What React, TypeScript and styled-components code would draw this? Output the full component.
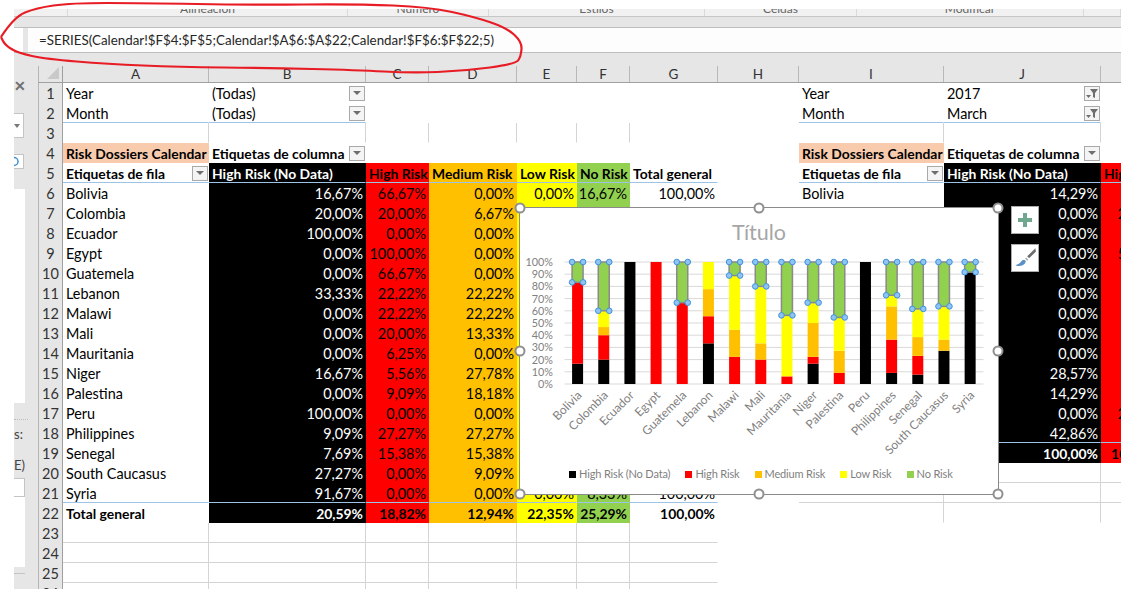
import styled, { createGlobalStyle } from 'styled-components';

const GlobalStyle = createGlobalStyle`
  html, body {
    margin: 0;
    padding: 0;
    background: #fff;
  }
  body {
    font-family: Lato, "Liberation Sans", sans-serif;
    overflow: hidden;
  }
`;

const COLUMNS = '25px 146px 157px 63px 88px 60px 53px 88px 81px 145px 157px 68px';

const colors = {
  black: '#000000',
  red: '#ff0000',
  orange: '#ffc000',
  yellow: '#ffff00',
  green: '#92d050',
  peach: '#f8cbad',
};

type Fill = keyof typeof colors;
type Line = 'grid' | 'blue';

type CellSpec = {
  text?: string;
  fill?: Fill;
  bold?: boolean;
  right?: boolean;
  filter?: 'arrow' | 'funnel';
  lineRight?: boolean;
  lineBottom?: Line;
};

const Page = styled.div`
  position: relative;
  width: 1121px;
  height: 589px;
  overflow: hidden;
  background: #fff;
  display: flex;
  flex-direction: column;
`;

const RibbonGap = styled.div`
  height: 9px;
`;

const Ribbon = styled.div`
  height: 7px;
  margin-left: 14px;
  background: #f1f1f1;
  border-bottom: 1px solid #c6c6c6;
  overflow: hidden;
  display: grid;
  grid-template-columns: 54px 280px 141px 216px 152px 227px 1fr;
`;

const RibbonGroup = styled.div`
  height: 7px;
  display: flex;
  align-items: flex-end;
  justify-content: center;
  font-size: 12px;
  line-height: 14px;
  color: #666;
  border-right: 1px solid #dadada;
`;

const RibbonBand = styled.div`
  height: 10px;
  margin-left: 14px;
  background: #e6e6e6;
  border-bottom: 1px solid #bdbdbd;
`;

const FormulaRow = styled.div`
  height: 24px;
  margin-left: 14px;
  background: #e6e6e6;
  border-bottom: 1px solid #bdbdbd;
  display: flex;
  gap: 5px;
`;

const NameBox = styled.div`
  width: 9px;
  background: #fff;
`;

const FormulaInput = styled.div`
  flex: 1;
  background: #fdfdfd;
  padding-left: 11px;
  font-size: 13.35px;
  line-height: 24px;
  color: #262626;
  white-space: nowrap;
`;

const Workspace = styled.div`
  flex: 1;
  display: flex;
  min-height: 0;
`;

const Margin = styled.div`
  width: 14px;
  flex-shrink: 0;
`;

const SidePanel = styled.div`
  width: 24px;
  flex-shrink: 0;
  background: #e6e6e6;
  display: flex;
  flex-direction: column;
  align-items: flex-start;
  overflow: hidden;
  box-sizing: border-box;
  padding-top: 25px;
`;

const CloseMark = styled.div`
  width: 12px;
  height: 16px;
  line-height: 16px;
  margin-bottom: 1px;
  text-align: center;
  font-size: 14px;
  font-weight: 900;
  color: #707070;
`;

const ComboBox = styled.div`
  width: 10px;
  height: 25px;
  margin-top: 18px;
  background: #fff;
  border: 1px solid #c4c4c4;
  border-left: none;
  box-sizing: border-box;
  display: flex;
  align-items: center;
`;

const ComboArrow = styled.span`
  width: 0;
  height: 0;
  border-left: 3px solid transparent;
  border-right: 3px solid transparent;
  border-top: 4px solid #777;
`;

const RefreshBox = styled.div`
  width: 10px;
  height: 15px;
  margin-top: 16px;
  background: #fff;
  border: 1px solid #c4c4c4;
  border-left: none;
  box-sizing: border-box;
  display: flex;
  align-items: center;
`;

const WhiteBlock = styled.div`
  width: 11px;
  height: 214px;
  margin-top: 20px;
  background: #fff;
`;

const DottedRule = styled.div`
  width: 14px;
  margin-top: 16px;
  border-top: 1px dotted #bdbdbd;
`;

const PanelLabel = styled.div<{ $top: number; $width: number }>`
  width: ${(p) => p.$width}px;
  height: 14px;
  margin-top: ${(p) => p.$top}px;
  font-size: 13px;
  line-height: 14px;
  color: #444;
  text-align: right;
`;

const InputPanel = styled.div`
  width: 11px;
  height: 89px;
  margin-top: 6px;
  background: #fff;
`;

const InputBox = styled.div`
  height: 19px;
  border: 1px solid #c4c4c4;
  border-left: none;
  box-sizing: border-box;
`;

const PanelRule = styled.div`
  width: 11px;
  margin-top: 6px;
  border-top: 1px solid #c4c4c4;
`;

const Sheet = styled.div`
  flex: 1;
  min-width: 0;
  display: flex;
  flex-direction: column;
`;

const HeaderRow = styled.div`
  display: grid;
  grid-template-columns: ${COLUMNS};
  background: #e6e6e6;
  padding-top: 13px;
  height: 30px;
  box-sizing: border-box;
  border-bottom: 1px solid #a0a0a0;
`;

const Corner = styled.div`
  border-left: 1px solid #b5b5b5;
  border-right: 1px solid #a0a0a0;
  display: flex;
  justify-content: flex-end;
  padding: 1px 3px 3px 0;
`;

const CornerMark = styled.span`
  width: 12px;
  height: 12px;
  background: #c9c9c9;
  clip-path: polygon(100% 0, 100% 100%, 0 100%);
`;

const ColumnLabel = styled.div`
  border-right: 1px solid #b8b8b8;
  text-align: center;
  font-size: 13.5px;
  line-height: 16px;
  color: #333;
`;

const Row = styled.div`
  display: grid;
  grid-template-columns: ${COLUMNS};
  height: 20px;
`;

const RowNumber = styled.div`
  box-sizing: border-box;
  background: #e6e6e6;
  border-left: 1px solid #b5b5b5;
  border-right: 1px solid #a0a0a0;
  border-bottom: 1px solid #b4b4b4;
  text-align: center;
  font-size: 14.5px;
  line-height: 21px;
  color: #333;
`;

const Cell = styled.div<{
  $fill?: Fill;
  $bold?: boolean;
  $right?: boolean;
  $lineRight?: boolean;
  $lineBottom?: Line;
}>`
  box-sizing: border-box;
  height: 20px;
  min-width: 0;
  display: flex;
  align-items: center;
  justify-content: ${(p) => (p.$right ? 'flex-end' : 'flex-start')};
  padding: 1px ${(p) => (p.$right ? 2 : 3)}px 0 3px;
  overflow: hidden;
  white-space: nowrap;
  font-size: ${(p) => (p.$bold ? 13.9 : 14.4)}px;
  font-weight: ${(p) => (p.$bold ? 700 : 400)};
  color: ${(p) => (p.$fill === 'black' ? '#fff' : '#000')};
  background: ${(p) => (p.$fill ? colors[p.$fill] : 'transparent')};
  border-right: 1px solid ${(p) => (p.$lineRight ? '#d4d4d4' : 'transparent')};
  border-bottom: 1px solid
    ${(p) =>
      p.$lineBottom === 'blue'
        ? '#9dc3e6'
        : p.$lineBottom === 'grid'
          ? '#d4d4d4'
          : 'transparent'};
`;

const FilterButton = styled.span`
  flex-shrink: 0;
  width: 16px;
  height: 15px;
  margin-left: auto;
  margin-right: -3px;
  box-sizing: border-box;
  background: #f4f4f4;
  border: 1px solid #a9a9a9;
  display: flex;
  align-items: center;
  justify-content: center;
`;

const FilterArrow = styled.span`
  width: 0;
  height: 0;
  border-left: 4px solid transparent;
  border-right: 4px solid transparent;
  border-top: 4px solid #6e6e6e;
`;

const ChartCard = styled.div`
  position: absolute;
  left: 519px;
  top: 207px;
  width: 480px;
  height: 288px;
  box-sizing: border-box;
  background: #fff;
  border: 1px solid #8a8a8a;
  display: flex;
  flex-direction: column;
`;

const ChartTitle = styled.div`
  height: 40px;
  padding-top: 10px;
  box-sizing: border-box;
  text-align: center;
  font-size: 21.5px;
  line-height: 28px;
  color: #a6a6a6;
`;

const PlotSvg = styled.svg`
  display: block;
  width: 478px;
  height: 214px;
`;

const AxisText = styled.text<{ $size: number }>`
  font-family: Lato, "Liberation Sans", sans-serif;
  font-size: ${(p) => p.$size}px;
  fill: #7f7f7f;
`;

const Legend = styled.div`
  display: flex;
  align-items: center;
  gap: 15px;
  padding: 4px 0 0 49px;
  font-size: 11px;
  letter-spacing: -0.15px;
  line-height: 16px;
  color: #7f7f7f;
  white-space: nowrap;
`;

const LegendItem = styled.div`
  display: flex;
  align-items: center;
  gap: 3px;
`;

const LegendSwatch = styled.span<{ $fill: Fill }>`
  width: 7px;
  height: 7px;
  background: ${(p) => colors[p.$fill]};
`;

const Handle = styled.span<{ $x: number; $y: number }>`
  position: absolute;
  left: ${(p) => p.$x}%;
  top: ${(p) => p.$y}%;
  width: 11px;
  height: 11px;
  box-sizing: border-box;
  transform: translate(-50%, -50%);
  border-radius: 50%;
  background: #fff;
  border: 2px solid #8f8f8f;
`;

const ChartTool = styled.div<{ $top: number }>`
  position: absolute;
  left: 1011px;
  top: ${(p) => p.$top}px;
  width: 28px;
  height: 28px;
  box-sizing: border-box;
  background: #fff;
  border: 1px solid #ababab;
  display: flex;
  align-items: center;
  justify-content: center;
`;

const Scribble = styled.svg`
  position: absolute;
  left: 0;
  top: 0;
  width: 1121px;
  height: 589px;
  pointer-events: none;
`;

type Country = [string, number, number, number, number, number];

const countries: Country[] = [
  ['Bolivia', 16.67, 66.67, 0, 0, 16.67],
  ['Colombia', 20, 20, 6.67, 13.33, 40],
  ['Ecuador', 100, 0, 0, 0, 0],
  ['Egypt', 0, 100, 0, 0, 0],
  ['Guatemela', 0, 66.67, 0, 0, 33.33],
  ['Lebanon', 33.33, 22.22, 22.22, 22.22, 0],
  ['Malawi', 0, 22.22, 22.22, 44.44, 11.11],
  ['Mali', 0, 20, 13.33, 46.67, 20],
  ['Mauritania', 0, 6.25, 0, 50, 43.75],
  ['Niger', 16.67, 5.56, 27.78, 16.67, 33.33],
  ['Palestina', 0, 9.09, 18.18, 27.27, 45.45],
  ['Peru', 100, 0, 0, 0, 0],
  ['Philippines', 9.09, 27.27, 27.27, 9.09, 27.27],
  ['Senegal', 7.69, 15.38, 15.38, 23.08, 38.46],
  ['South Caucasus', 27.27, 0, 9.09, 27.27, 36.36],
  ['Syria', 91.67, 0, 0, 0, 8.33],
];

const seriesFills: Fill[] = ['black', 'red', 'orange', 'yellow', 'green'];
const seriesNames = ['High Risk (No Data)', 'High Risk', 'Medium Risk', 'Low Risk', 'No Risk'];

const pct = (n: number) => n.toFixed(2).replace('.', ',') + '%';

// J and K of the second pivot, rows 6 to 19
const secondPivot: [string, string][] = [
  ['14,29%', '0,00%'],
  ['0,00%', '25,00%'],
  ['0,00%', '0,00%'],
  ['0,00%', '50,00%'],
  ['0,00%', '0,00%'],
  ['0,00%', '0,00%'],
  ['0,00%', '0,00%'],
  ['0,00%', '0,00%'],
  ['0,00%', '0,00%'],
  ['28,57%', '0,00%'],
  ['14,29%', '0,00%'],
  ['0,00%', '25,00%'],
  ['42,86%', '0,00%'],
  ['100,00%', '100,00%'],
];

function leftCells(row: number): CellSpec[] {
  if (row === 1 || row === 2) {
    const line: Line | undefined = row === 2 ? 'blue' : undefined;
    return [
      { text: row === 1 ? 'Year' : 'Month', lineBottom: line },
      { text: '(Todas)', filter: 'arrow', lineBottom: line },
      {}, {}, {}, {}, {},
    ];
  }
  if (row === 3) {
    return Array.from({ length: 6 }, () => ({ lineRight: true } as CellSpec)).concat([{}]);
  }
  if (row === 4) {
    return [
      { text: 'Risk Dossiers Calendar', fill: 'peach', bold: true },
      { text: 'Etiquetas de columna', bold: true, filter: 'arrow' },
      {}, {}, {}, {}, {},
    ];
  }
  if (row === 5) {
    const b: Line = 'blue';
    return [
      { text: 'Etiquetas de fila', bold: true, filter: 'arrow', lineBottom: b },
      { text: 'High Risk (No Data)', fill: 'black', bold: true, lineBottom: b },
      { text: 'High Risk', fill: 'red', bold: true, lineBottom: b },
      { text: 'Medium Risk', fill: 'orange', bold: true, lineBottom: b },
      { text: 'Low Risk', fill: 'yellow', bold: true, lineBottom: b },
      { text: 'No Risk', fill: 'green', bold: true, lineBottom: b },
      { text: 'Total general', bold: true, lineBottom: b },
    ];
  }
  if (row >= 6 && row <= 21) {
    const [name, ...vals] = countries[row - 6];
    const line: Line | undefined = row === 21 ? 'blue' : undefined;
    return [
      { text: name, lineBottom: line },
      ...vals.map((v, i) => ({ text: pct(v), fill: seriesFills[i], right: true, lineBottom: line })),
      { text: '100,00%', right: true, lineBottom: line },
    ];
  }
  if (row === 22) {
    const totals = [20.59, 18.82, 12.94, 22.35, 25.29];
    return [
      { text: 'Total general', bold: true },
      ...totals.map((v, i) => ({ text: pct(v), fill: seriesFills[i], bold: true, right: true })),
      { text: '100,00%', bold: true, right: true },
    ];
  }
  const empty = Array.from(
    { length: 6 },
    () => ({ lineRight: true, lineBottom: row < 26 ? 'grid' : undefined } as CellSpec),
  );
  return empty.concat([{ lineBottom: row < 26 ? 'grid' : undefined }]);
}

function rightCells(row: number): CellSpec[] {
  if (row === 1 || row === 2) {
    const line: Line | undefined = row === 2 ? 'blue' : undefined;
    return [
      { text: row === 1 ? 'Year' : 'Month', lineBottom: line },
      { text: row === 1 ? '2017' : 'March', filter: 'funnel', lineBottom: line },
      {},
    ];
  }
  if (row === 3) return [{ lineRight: true }, { lineRight: true }, {}];
  if (row === 4) {
    return [
      { text: 'Risk Dossiers Calendar', fill: 'peach', bold: true },
      { text: 'Etiquetas de columna', bold: true, filter: 'arrow' },
      {},
    ];
  }
  if (row === 5) {
    return [
      { text: 'Etiquetas de fila', bold: true, filter: 'arrow', lineBottom: 'blue' },
      { text: 'High Risk (No Data)', fill: 'black', bold: true, lineBottom: 'blue' },
      { text: 'High Risk', fill: 'red', bold: true, lineBottom: 'blue' },
    ];
  }
  if (row >= 6 && row <= 19) {
    const [j, k] = secondPivot[row - 6];
    const total = row === 19;
    const line: Line | undefined = row === 18 ? 'blue' : undefined;
    return [
      { text: row === 6 ? 'Bolivia' : undefined, lineBottom: line },
      { text: j, fill: 'black', right: true, bold: total, lineBottom: line },
      { text: k, fill: 'red', right: true, bold: total, lineBottom: line },
    ];
  }
  if (row === 20 || row === 21) {
    return [
      { lineRight: true, lineBottom: 'grid' },
      { lineRight: true, lineBottom: 'grid' },
      { lineBottom: 'grid' },
    ];
  }
  if (row === 22) return [{ lineRight: true }, { lineRight: true }, {}];
  return [{}, {}, {}];
}

function SheetCell({ spec }: { spec: CellSpec }) {
  return (
    <Cell
      $fill={spec.fill}
      $bold={spec.bold}
      $right={spec.right}
      $lineRight={spec.lineRight}
      $lineBottom={spec.lineBottom}
    >
      {spec.text}
      {spec.filter && (
        <FilterButton>
          {spec.filter === 'arrow' ? (
            <FilterArrow />
          ) : (
            <svg width="14" height="13" viewBox="0 0 14 13">
              <path d="M5 2h8L10 6v5L8 10V6z" fill="#6e6e6e" />
              <path d="M1 8h5L3.500 11z" fill="#6e6e6e" />
            </svg>
          )}
        </FilterButton>
      )}
    </Cell>
  );
}

const PLOT_BOTTOM = 384;
const PLOT_HEIGHT = 122;
const PLOT_LEFT = 564.5;
const SLOT = 26.17;
const BAR = 11;

const yFor = (value: number) => PLOT_BOTTOM - (PLOT_HEIGHT * value) / 100;

function Plot() {
  return (
    <PlotSvg viewBox="520 248 478 214">
      {Array.from({ length: 11 }, (_, i) => (
        <g key={i}>
          <line x1={PLOT_LEFT} x2="983.500" y1={yFor(i * 10)} y2={yFor(i * 10)} stroke="#d9d9d9" />
          <AxisText $size={10.800} x="553" y={yFor(i * 10) + 4} textAnchor="end">
            {i * 10}%
          </AxisText>
        </g>
      ))}
      {countries.map(([name, ...vals], c) => {
        const x = PLOT_LEFT + SLOT * c + (SLOT - BAR) / 2;
        let sum = 0;
        const last = vals[4];
        return (
          <g key={name}>
            {vals.map((v, s) => {
              const top = yFor(sum + v);
              const h = yFor(sum) - top;
              sum += v;
              if (v === 0) return null;
              return (
                <rect
                  key={s}
                  x={x}
                  y={top}
                  width={BAR}
                  height={h}
                  fill={colors[seriesFills[s]]}
                  stroke={s === 4 ? '#8a8a8a' : 'none'}
                  strokeWidth={s === 4 ? 1.5 : 0}
                />
              );
            })}
            {last > 0 &&
              [
                [x, yFor(100)],
                [x + BAR, yFor(100)],
                [x, yFor(100 - last)],
                [x + BAR, yFor(100 - last)],
              ].map(([cx, cy], h) => (
                <circle key={h} cx={cx} cy={cy} r="2.800" fill="#8fc4f0" stroke="#3f92dc" />
              ))}
            <AxisText
              $size={12}
              x={x + BAR / 2 + 5}
              y="396"
              textAnchor="end"
              transform={`rotate(-45 ${x + BAR / 2 + 5} 396)`}
            >
              {name}
            </AxisText>
          </g>
        );
      })}
    </PlotSvg>
  );
}

// red marker ring that was drawn by hand round the formula
const ringPoints = [
  [1, 37], [14, 17], [36, 8], [71, 3], [143, 3], [250, 5], [357, 4], [429, 7], [475, 17], [507, 28],
  [522, 42], [521, 56], [516, 64], [464, 71], [411, 73], [357, 70], [268, 68], [179, 67], [107, 64],
  [46, 59], [18, 53], [5, 45], [1, 37],
];

function ringPath() {
  let d = `M${ringPoints[0][0]} ${ringPoints[0][1]}`;
  for (let i = 1; i < ringPoints.length - 1; i++) {
    const [x, y] = ringPoints[i];
    const [nx, ny] = ringPoints[i + 1];
    d += ` Q${x} ${y} ${(x + nx) / 2} ${(y + ny) / 2}`;
  }
  const end = ringPoints[ringPoints.length - 1];
  return d + ` L${end[0]} ${end[1]}`;
}

const handles: [number, number][] = [
  [0, 0], [50, 0], [100, 0], [0, 50], [100, 50], [0, 100], [50, 100], [100, 100],
];

const ribbonGroups = ['', 'Alineación', 'Número', 'Estilos', 'Celdas', 'Modificar', ''];
const columnLetters = 'ABCDEFGHIJK'.split('');

export default function App() {
  const rows = Array.from({ length: 26 }, (_, i) => i + 1);

  return (
    <Page>
      <GlobalStyle />
      <RibbonGap />
      <Ribbon>
        {ribbonGroups.map((g, i) => (
          <RibbonGroup key={i}>{g}</RibbonGroup>
        ))}
      </Ribbon>
      <RibbonBand />
      <FormulaRow>
        <NameBox />
        <FormulaInput>=SERIES(Calendar!$F$4:$F$5;Calendar!$A$6:$A$22;Calendar!$F$6:$F$22;5)</FormulaInput>
      </FormulaRow>
      <Workspace>
        <Margin />
        <SidePanel>
          <CloseMark>✕</CloseMark>
          <ComboBox>
            <ComboArrow />
          </ComboBox>
          <RefreshBox>
            <svg width="8" height="11" viewBox="0 0 8 11">
              <path d="M0 1.500a4 4 0 0 1 4 4 4 4 0 0 1-4 4" fill="none" stroke="#3f8fd0" strokeWidth="1.500" />
            </svg>
          </RefreshBox>
          <WhiteBlock />
          <DottedRule />
          <PanelLabel $top={7} $width={7}>s:</PanelLabel>
          <PanelLabel $top={17} $width={10}>E)</PanelLabel>
          <InputPanel>
            <InputBox />
          </InputPanel>
          <PanelRule />
        </SidePanel>
        <Sheet>
          <HeaderRow>
            <Corner>
              <CornerMark />
            </Corner>
            {columnLetters.map((c) => (
              <ColumnLabel key={c}>{c}</ColumnLabel>
            ))}
          </HeaderRow>
          {rows.map((r) => (
            <Row key={r}>
              <RowNumber>{r}</RowNumber>
              {leftCells(r).map((spec, i) => (
                <SheetCell key={i} spec={spec} />
              ))}
              <Cell />
              {rightCells(r).map((spec, i) => (
                <SheetCell key={i} spec={spec} />
              ))}
            </Row>
          ))}
        </Sheet>
      </Workspace>

      <ChartCard>
        <ChartTitle>Título</ChartTitle>
        <Plot />
        <Legend>
          {seriesNames.map((name, i) => (
            <LegendItem key={name}>
              <LegendSwatch $fill={seriesFills[i]} />
              {name}
            </LegendItem>
          ))}
        </Legend>
        {handles.map(([x, y]) => (
          <Handle key={`${x}-${y}`} $x={x} $y={y} />
        ))}
      </ChartCard>

      <ChartTool $top={206}>
        <svg width="16" height="16" viewBox="0 0 16 16">
          <path d="M6 1h4v5h5v4h-5v5H6v-5H1V6h5z" fill="#6fa88f" />
        </svg>
      </ChartTool>
      <ChartTool $top={244}>
        <svg width="24" height="24" viewBox="0 0 22 22">
          <path d="M20.500 2 13 9.500l1.800 1.800L21 5z" fill="#6d6d6d" />
          <path d="M12 10.500l2 2-1 1-2-2z" fill="#a8a8a8" />
          <path d="M10 12.500c-2.200.3-2.800 2.200-4 3.400-.9.900-2.600 1.200-3.800 1.700 2.600 1.200 6.500.9 8.300-1 1-1.100 1.400-2.500.9-3.200z" fill="#5b8fc7" />
        </svg>
      </ChartTool>

      <Scribble viewBox="0 0 1121 589">
        <path d={ringPath()} fill="none" stroke="#e81c24" strokeWidth="2.200" />
      </Scribble>
    </Page>
  );
}
